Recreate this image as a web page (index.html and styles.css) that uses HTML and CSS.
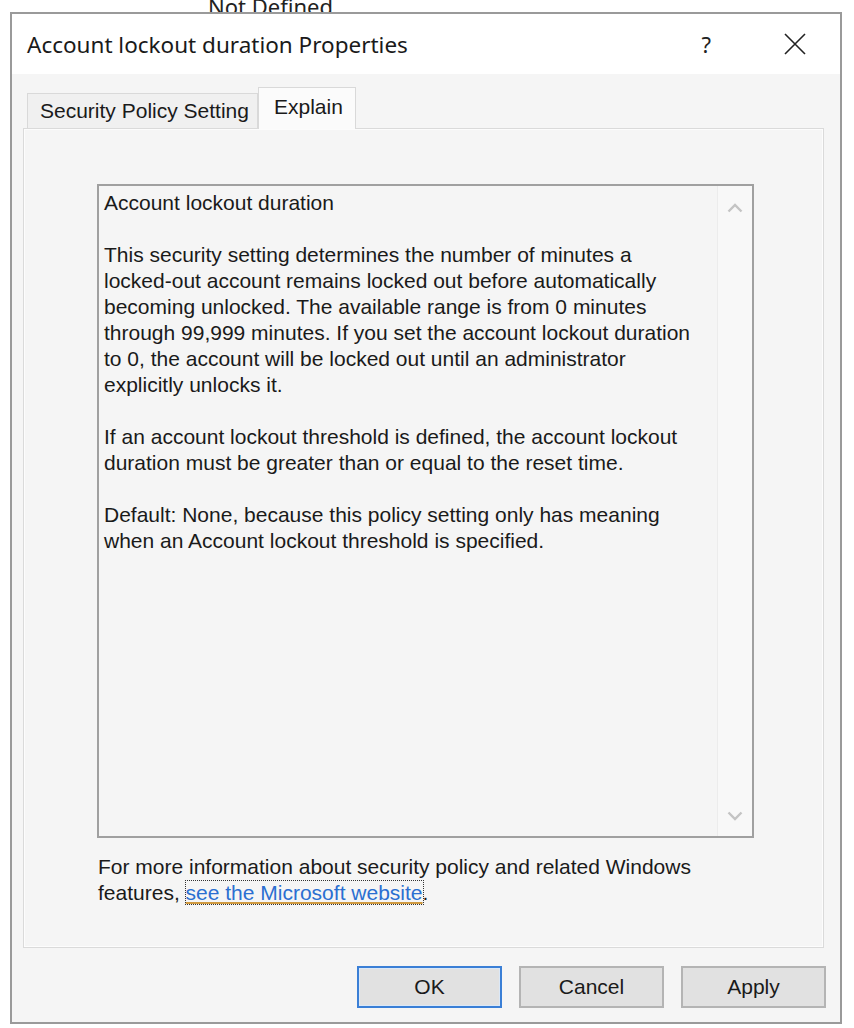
FILE: index.html
```html
<!DOCTYPE html>
<html>
<head>
<meta charset="utf-8">
<link rel="stylesheet" href="styles.css">
</head>
<body>
<div class="behind"><span class="behind-text">Not Defined</span></div>
<div class="window">
  <div class="titlebar">
    <span class="title">Account lockout duration Properties</span>
    <span class="help">?</span>
    <span class="close">
      <svg width="22" height="22" viewBox="0 0 22 22"><path d="M1 1L21 21M21 1L1 21" stroke="#222" stroke-width="1.6" fill="none"/></svg>
    </span>
  </div>
  <div class="tabs">
    <div class="tab">Security Policy Setting</div>
    <div class="tab active">Explain</div>
  </div>
  <div class="panel">
    <div class="textbox">
      <div class="text">
        <p>Account lockout duration</p>
        <p>This security setting determines the number of minutes a<br>locked-out account remains locked out before automatically<br>becoming unlocked. The available range is from 0 minutes<br>through 99,999 minutes. If you set the account lockout duration<br>to 0, the account will be locked out until an administrator<br>explicitly unlocks it.</p>
        <p>If an account lockout threshold is defined, the account lockout<br>duration must be greater than or equal to the reset time.</p>
        <p>Default: None, because this policy setting only has meaning<br>when an Account lockout threshold is specified.</p>
      </div>
      <div class="scrollbar">
        <svg class="chev" width="16" height="10" viewBox="0 0 16 10"><path d="M1.5 8.5L8 2L14.5 8.5" stroke="#c4c4c4" stroke-width="2.4" fill="none"/></svg>
        <svg class="chev" width="16" height="10" viewBox="0 0 16 10"><path d="M1.5 1.5L8 8L14.5 1.5" stroke="#c4c4c4" stroke-width="2.4" fill="none"/></svg>
      </div>
    </div>
    <div class="more">For more information about security policy and related Windows<br>features, <span class="link">see the Microsoft website</span>.</div>
  </div>
  <div class="buttons">
    <div class="btn default">OK</div>
    <div class="btn">Cancel</div>
    <div class="btn">Apply</div>
  </div>
</div>
</body>
</html>
```
FILE: styles.css
```css
html, body {
  margin: 0;
  padding: 0;
  background: #ffffff;
}
body {
  font-family: "Liberation Sans", Arial, sans-serif;
  color: #1a1a1a;
}
.behind {
  height: 12px;
  overflow: hidden;
  padding-left: 208px;
}
.behind-text {
  display: block;
  font-family: "Noto Sans", sans-serif;
  font-size: 22px;
  line-height: 24px;
  margin-top: -6px;
  color: #222;
}
.window {
  margin-left: 10px;
  width: 832px;
  height: 1012px;
  box-sizing: border-box;
  border: 2px solid #9a9a9a;
  background: #f5f5f5;
  display: flex;
  flex-direction: column;
}
.titlebar {
  height: 60px;
  flex: none;
  background: #ffffff;
  display: flex;
  align-items: center;
  padding-left: 15px;
}
.title {
  font-family: "Noto Sans", sans-serif;
  font-size: 22.5px;
  color: #1a1a1a;
  flex: 1;
}
.help {
  font-family: "Noto Sans", sans-serif;
  font-size: 22px;
  color: #222;
  margin-right: 73px;
}
.close {
  display: flex;
  margin-right: 34px;
}
.tabs {
  display: flex;
  align-items: flex-end;
  height: 54px;
  flex: none;
  padding-left: 15px;
  position: relative;
  z-index: 1;
}
.tab {
  box-sizing: border-box;
  width: 231px;
  height: 35px;
  border: 1px solid #d9d9d9;
  border-bottom: none;
  background: #f0f0f0;
  font-size: 21px;
  padding-left: 12px;
  line-height: 34px;
  color: #1a1a1a;
}
.tab.active {
  width: 98px;
  height: 42px;
  margin-bottom: -1px;
  background: #fbfbfb;
  line-height: 38px;
  padding-left: 15px;
}
.panel {
  margin-left: 11px;
  width: 801px;
  height: 820px;
  flex: none;
  box-sizing: border-box;
  border: 1px solid #dadada;
  box-shadow: inset 0 0 0 1px #fcfcfc;
  background: #f5f5f5;
  padding: 55px 0 0 73px;
}
.textbox {
  width: 657px;
  height: 654px;
  box-sizing: border-box;
  border: 2px solid #a0a0a0;
  background: #f5f5f5;
  display: flex;
}
.text {
  flex: 1;
  padding: 4px 0 0 5px;
  font-size: 21px;
  line-height: 26px;
  white-space: nowrap;
  overflow: hidden;
  color: #1a1a1a;
}
.text p {
  margin: 0 0 26px 0;
}
.scrollbar {
  width: 34px;
  flex: none;
  background: #f8f8f8;
  border-left: 1px solid #ececec;
  display: flex;
  flex-direction: column;
  justify-content: space-between;
  align-items: center;
  padding: 17px 0 15px 0;
}
.chev {
  display: block;
}
.more {
  margin-top: 16px;
  margin-left: 1px;
  font-size: 21px;
  line-height: 26px;
  color: #1a1a1a;
}
.link {
  color: #2b6fd1;
  text-decoration: underline;
  text-decoration-color: #d09a40;
  outline: 1px dotted #333;
  outline-offset: 0;
}
.buttons {
  display: flex;
  justify-content: flex-end;
  gap: 17px;
  padding: 18px 14px 0 0;
}
.btn {
  box-sizing: border-box;
  width: 145px;
  height: 42px;
  border: 2px solid #b4b4b4;
  background: #e1e1e1;
  font-size: 21px;
  display: flex;
  align-items: center;
  justify-content: center;
  color: #1a1a1a;
}
.btn.default {
  border: 2px solid #3a7fd6;
  box-shadow: inset 0 0 0 1px #dbe8f7;
}
```
